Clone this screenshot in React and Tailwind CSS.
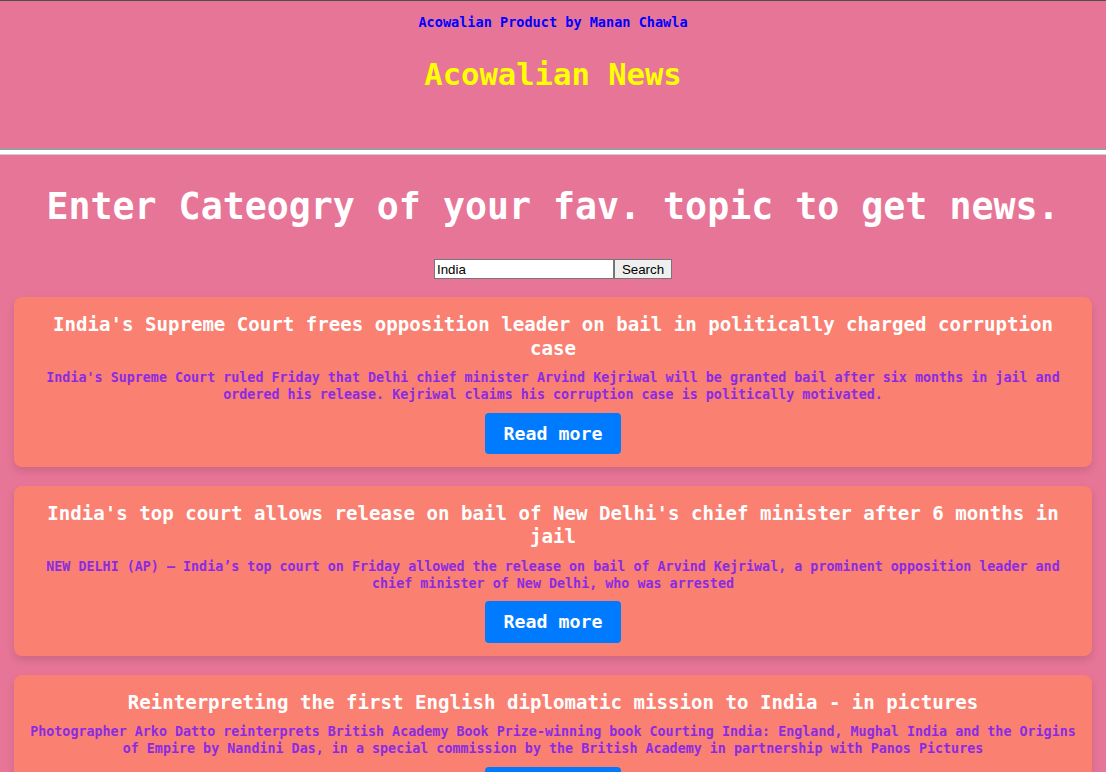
import { useState } from "react"

const articles = [
    {
        id: 1,
        title: "India's Supreme Court frees opposition leader on bail in politically charged corruption case",
        description: "India's Supreme Court ruled Friday that Delhi chief minister Arvind Kejriwal will be granted bail after six months in jail and ordered his release. Kejriwal claims his corruption case is politically motivated.",
    },
    {
        id: 2,
        title: "India's top court allows release on bail of New Delhi's chief minister after 6 months in jail",
        description: "NEW DELHI (AP) — India’s top court on Friday allowed the release on bail of Arvind Kejriwal, a prominent opposition leader and chief minister of New Delhi, who was arrested",
    },
    {
        id: 3,
        title: "Reinterpreting the first English diplomatic mission to India - in pictures",
        description: "Photographer Arko Datto reinterprets British Academy Book Prize-winning book Courting India: England, Mughal India and the Origins of Empire by Nandini Das, in a special commission by the British Academy in partnership with Panos Pictures",
    },
];

const NewsCard = ({ article }) => {
    return (
        <div className="mx-[14px] mb-[18.8px] h-[170px] rounded-[8px] bg-[#fa8072] px-[12px] pt-[15.5px] text-center shadow-[0_4px_8px_rgba(0,0,0,0.12)]">
            <h2 className="text-[19.1px] leading-[23.6px] font-bold text-white">{article.title}</h2>
            <p className="mt-[10px] text-[13.37px] leading-[16.7px] font-bold text-[#8a2be2]">{article.description}</p>
            <button className="mt-[9px] h-[41.3px] rounded-[4px] bg-[#007bff] px-[19px] text-[18.27px] font-bold text-white">
                Read more
            </button>
        </div>
    );
};

const App = () => {
    const [query, setQuery] = useState("India");

    return (
        <div className="h-[772px] overflow-hidden border-t border-[#4f4f4f] bg-[#e77597] font-['DejaVu_Sans_Mono',monospace]">
            <header className="h-[147px] pt-[11.3px] text-center">
                <p className="text-[13.56px] leading-[20px] font-bold text-[#0000ff]">Acowalian Product by Manan Chawla</p>
                <h1 className="mt-[25px] text-[30.55px] leading-[36px] font-bold text-[#ffff00]">Acowalian News</h1>
            </header>
            <div className="h-[7.3px] border-t-2 border-b border-t-[#9c9c9c] border-b-[#cfcfcf] bg-white"></div>

            <h2 className="mt-[29.3px] text-center text-[36.6px] leading-[44px] font-bold text-white">
                Enter Cateogry of your fav. topic to get news.
            </h2>

            <div className="mt-[30.7px] flex justify-center">
                <input
                    value={query}
                    onChange={(e) => setQuery(e.target.value)}
                    className="h-[19.5px] w-[180px] border border-[#767676] bg-white px-[2px] font-['Liberation_Sans',Arial,sans-serif] text-[13.33px] text-black outline-none"
                />
                <button className="h-[19.5px] w-[58px] border border-[#767676] bg-[#efefef] font-['Liberation_Sans',Arial,sans-serif] text-[13.33px] text-black">
                    Search
                </button>
            </div>

            <div className="mt-[18.7px]">
                {articles.map(article => (
                    <NewsCard key={article.id} article={article} />
                ))}
            </div>
        </div>
    );
};

export default App;
